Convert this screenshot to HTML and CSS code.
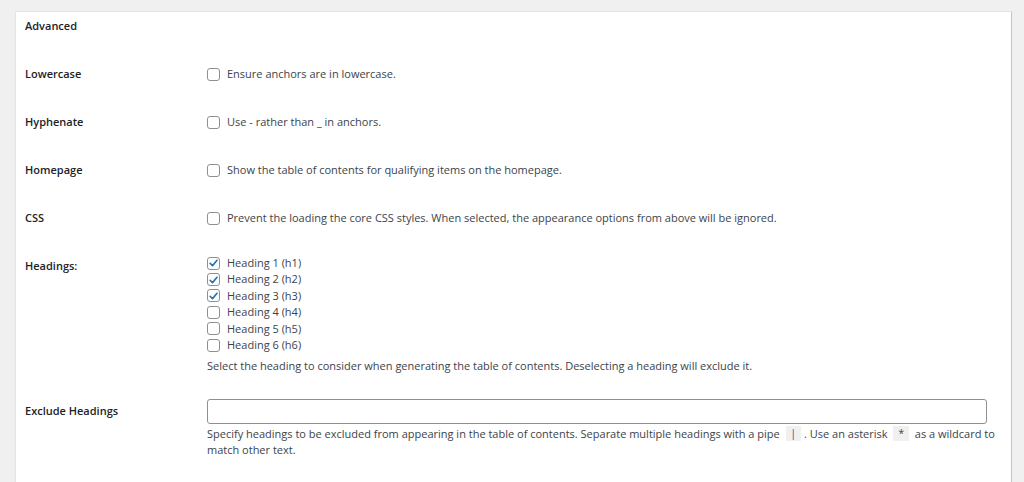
FILE: index.html
```html
<!DOCTYPE html>
<html>
<head>
<meta charset="utf-8">
<link rel="stylesheet" href="styles.css">
</head>
<body>
<div class="card">
  <div class="section-title">Advanced</div>
  <div class="row">
    <div class="label">Lowercase</div>
    <div class="field"><label class="opt"><span class="box"></span>Ensure anchors are in lowercase.</label></div>
  </div>
  <div class="row">
    <div class="label">Hyphenate</div>
    <div class="field"><label class="opt"><span class="box"></span>Use - rather than _ in anchors.</label></div>
  </div>
  <div class="row">
    <div class="label">Homepage</div>
    <div class="field"><label class="opt"><span class="box"></span>Show the table of contents for qualifying items on the homepage.</label></div>
  </div>
  <div class="row">
    <div class="label">CSS</div>
    <div class="field"><label class="opt"><span class="box"></span>Prevent the loading the core CSS styles. When selected, the appearance options from above will be ignored.</label></div>
  </div>
  <div class="row row-headings">
    <div class="label">Headings:</div>
    <div class="field">
      <div class="list">
        <label class="opt tight"><span class="box checked"><svg viewBox="0 0 12 12" width="12" height="12"><path d="M2.3 6.3 L4.9 8.9 L9.8 3" fill="none" stroke="#2271b1" stroke-width="1.8" stroke-linecap="round" stroke-linejoin="round"/></svg></span>Heading 1 (h1)</label>
        <label class="opt tight"><span class="box checked"><svg viewBox="0 0 12 12" width="12" height="12"><path d="M2.3 6.3 L4.9 8.9 L9.8 3" fill="none" stroke="#2271b1" stroke-width="1.8" stroke-linecap="round" stroke-linejoin="round"/></svg></span>Heading 2 (h2)</label>
        <label class="opt tight"><span class="box checked"><svg viewBox="0 0 12 12" width="12" height="12"><path d="M2.3 6.3 L4.9 8.9 L9.8 3" fill="none" stroke="#2271b1" stroke-width="1.8" stroke-linecap="round" stroke-linejoin="round"/></svg></span>Heading 3 (h3)</label>
        <label class="opt tight"><span class="box"></span>Heading 4 (h4)</label>
        <label class="opt tight"><span class="box"></span>Heading 5 (h5)</label>
        <label class="opt tight"><span class="box"></span>Heading 6 (h6)</label>
      </div>
      <p class="desc">Select the heading to consider when generating the table of contents. Deselecting a heading will exclude it.</p>
    </div>
  </div>
  <div class="row row-exclude">
    <div class="label">Exclude Headings</div>
    <div class="field">
      <div class="input"></div>
      <p class="desc wide">Specify headings to be excluded from appearing in the table of contents. Separate multiple headings with a pipe <code>|</code>. Use an asterisk <code>*</code> as a wildcard to match other text.</p>
    </div>
  </div>
</div>
</body>
</html>
```
FILE: styles.css
```css
html, body {
  margin: 0;
  padding: 0;
  background: #f0f0f1;
  height: 100%;
  overflow: hidden;
}
body {
  padding: 11px 12px 0 15px;
  font-family: "Open Sans", "Noto Sans", sans-serif;
  font-size: 11px;
  color: #3c434a;
}
.card {
  background: #fff;
  border: 1px solid #e2e4e7;
  border-right: 1px solid #c3c4c7;
  border-bottom: none;
  box-shadow: 0 1px 1px rgba(0,0,0,0.04);
  padding: 6px 24px 0 9px;
  height: 600px;
}
.section-title {
  font-weight: 600;
  color: #1d2327;
  line-height: 16px;
  height: 48px;
}
.row {
  display: flex;
  align-items: flex-start;
  height: 48px;
}
.label {
  width: 182px;
  flex: none;
  font-weight: 600;
  color: #1d2327;
  line-height: 16px;
}
.field {
  flex: 1;
  min-width: 0;
}
.opt {
  display: flex;
  align-items: center;
  line-height: 16px;
}
.box {
  width: 11px;
  height: 11px;
  border: 1px solid #8c8f94;
  border-radius: 3px;
  margin-right: 7px;
  flex: none;
  display: inline-flex;
  align-items: center;
  justify-content: center;
  background: #fff;
}
.box svg { display: block; }
.tight { line-height: 16.4px; height: 16.4px; }
.row-headings {
  height: auto;
}
.list { margin-top: -3px; }
.desc {
  margin: 5px 0 0;
  line-height: 16px;
}
.row-exclude {
  margin-top: 25px;
}
.row-exclude .label { padding-top: 4px; }
.input {
  height: 23px;
  border: 1px solid #8c8f94;
  border-radius: 3px;
  background: #fff;
  margin-right: 0;
}
.row-exclude .desc { margin-top: 2px; }
.wide { margin-right: -8px !important; }
code {
  display: inline-block;
  font-family: "Open Sans", sans-serif;
  background: #f0f0f1;
  padding: 0 5px;
  margin: 0 3px;
  font-size: 10px;
  line-height: 15px;
  vertical-align: top;
}
```
